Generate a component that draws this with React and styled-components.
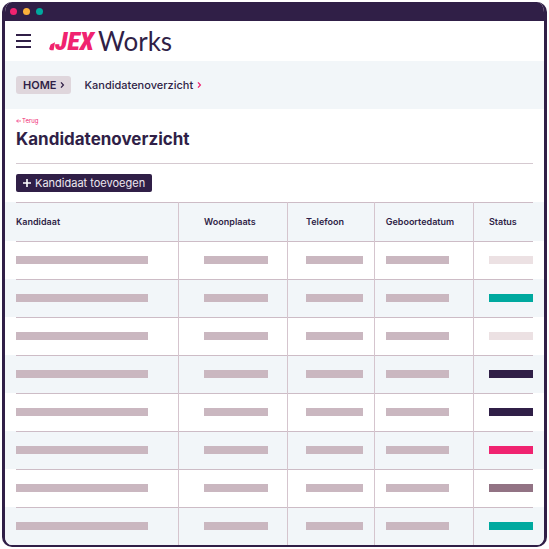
import styled, { createGlobalStyle } from "styled-components";

const GlobalStyle = createGlobalStyle`
  * {
    box-sizing: border-box;
  }

  body {
    margin: 0;
    background: #fff;
    color: #301f47;
    font-family: Inter, "Open Sans", sans-serif;
  }
`;

const Page = styled.div`
  padding: 2px;
`;

const Window = styled.div`
  border: 3px solid #301f47;
  border-top: 0;
  border-bottom-width: 2px;
  border-radius: 10px;
  overflow: hidden;
  background: #fff;
`;

const TitleBar = styled.div`
  display: flex;
  align-items: center;
  gap: 6px;
  height: 19px;
  padding: 0 5px;
  background: #301f47;
`;

const Dot = styled.span`
  width: 7px;
  height: 7px;
  border-radius: 50%;
  background: ${(props) => props.color};
`;

const Header = styled.header`
  display: flex;
  align-items: center;
  gap: 18px;
  height: 40px;
  padding: 0 11px;
`;

const MenuButton = styled.button`
  display: flex;
  padding: 0;
  border: 0;
  background: none;
  color: #301f47;
  cursor: pointer;
`;

const Logo = styled.a`
  display: flex;
  align-items: center;
  color: #301f47;
  text-decoration: none;
`;

const LogoBrand = styled.span`
  color: #f02370;
  font-family: "Liberation Sans Narrow", "Roboto Condensed", "DejaVu Sans Condensed", sans-serif;
  font-size: 26px;
  font-weight: 900;
  font-style: italic;
  line-height: 28px;
`;

const LogoName = styled.span`
  margin-left: 4px;
  font-family: Lato, sans-serif;
  font-size: 26px;
  line-height: 28px;
`;

const Breadcrumbs = styled.nav`
  display: flex;
  align-items: center;
  gap: 13px;
  height: 48px;
  padding: 0 11px;
  background: #f2f6f9;
  font-size: 11px;
  line-height: 18px;
`;

const Crumb = styled.a`
  display: flex;
  align-items: center;
  gap: 4px;
  color: #301f47;
  font-weight: 500;
  text-decoration: none;
`;

const HomeCrumb = styled(Crumb)`
  padding: 0 6px 0 7px;
  border-radius: 3px;
  background: #dfd6dc;
  font-weight: 600;
`;

const Intro = styled.section`
  padding: 8px 11px 0;
`;

const BackLink = styled.a`
  display: flex;
  align-items: center;
  gap: 1px;
  color: #f02370;
  font-size: 6px;
  line-height: 8px;
  text-decoration: none;
`;

const Title = styled.h1`
  margin: 4px 0 0;
  padding-bottom: 14px;
  border-bottom: 1px solid #d5c9d0;
  font-size: 17px;
  font-weight: 700;
  line-height: 20px;
`;

const AddButton = styled.button`
  display: flex;
  align-items: center;
  gap: 4px;
  height: 18px;
  margin: 10px 0;
  padding: 0 7px;
  border: 0;
  border-radius: 2px;
  background: #301f47;
  color: #eee8f0;
  font-family: inherit;
  font-size: 11px;
  line-height: 18px;
  cursor: pointer;
`;

const Table = styled.table`
  width: 100%;
  table-layout: fixed;
  border-spacing: 0;
`;

const Col = styled.col`
  width: ${(props) => props.$share}%;
`;

const Row = styled.tr`
  height: ${(props) => (props.$head ? 39 : 38)}px;
  background: linear-gradient(#cdbcc6, #cdbcc6) 11px 0 / calc(100% - 22px) 1px no-repeat
    ${(props) => (props.$shaded ? "#f2f6f9" : "#fff")};
`;

const cellPadding = (props) => `0 ${props.$right}px 0 ${props.$left}px`;

const HeadCell = styled.th`
  padding: ${cellPadding};
  border-right: 1px solid #d5c5ce;
  font-size: 9px;
  font-weight: 600;
  line-height: 12px;
  text-align: left;
  white-space: nowrap;

  &:last-child {
    border-right: 0;
  }
`;

const Cell = styled.td`
  padding: ${cellPadding};
  border-right: 1px solid #d5c5ce;

  &:last-child {
    border-right: 0;
  }
`;

const Bar = styled.div`
  height: 8px;
  background: ${(props) => props.color || "#cab7c0"};
`;

const columns = [
  { name: "Kandidaat", share: 32.3, left: 11, right: 30 },
  { name: "Woonplaats", share: 20.2, left: 25, right: 19 },
  { name: "Telefoon", share: 16.1, left: 18, right: 11 },
  { name: "Geboortedatum", share: 18.4, left: 11, right: 24 },
  { name: "Status", share: 13, left: 15, right: 11 },
];

const statuses = [
  "#ece1e3",
  "#00a99f",
  "#ece1e3",
  "#301f47",
  "#301f47",
  "#f02370",
  "#927384",
  "#00a99f",
];

const Chevron = ({ color }) => (
  <svg width="5" height="8" viewBox="0 0 5 8" fill="none" stroke={color} strokeWidth="1.3">
    <path d="M1 1.4 3.4 4 1 6.6" />
  </svg>
);

const App = () => {
  return (
    <>
      <GlobalStyle />
      <Page>
        <Window>
          <TitleBar>
            <Dot color="#f02370" />
            <Dot color="#fbb03b" />
            <Dot color="#00a99f" />
          </TitleBar>
          <Header>
            <MenuButton aria-label="Menu">
              <svg width="15" height="14" viewBox="0 0 15 14" stroke="currentColor" strokeWidth="1.8">
                <path d="M0 1h15M0 7h15M0 13h15" />
              </svg>
            </MenuButton>
            <Logo href="#">
              <svg width="6" height="20" viewBox="0 0 6 20" fill="#f02370">
                <path d="M1.6 13.5 6 11.2 4.6 19.2H2Q-.2 19 .4 17z" />
              </svg>
              <LogoBrand>JEX</LogoBrand>
              <LogoName>Works</LogoName>
            </Logo>
          </Header>
          <Breadcrumbs>
            <HomeCrumb href="#">
              HOME <Chevron color="#301f47" />
            </HomeCrumb>
            <Crumb href="#">
              Kandidatenoverzicht <Chevron color="#f02370" />
            </Crumb>
          </Breadcrumbs>
          <main>
            <Intro>
              <BackLink href="#">
                <svg width="5" height="4" viewBox="0 0 5 4" fill="none" stroke="currentColor" strokeWidth=".7">
                  <path d="M5 2H.7M2.2.4.6 2l1.6 1.6" />
                </svg>
                Terug
              </BackLink>
              <Title>Kandidatenoverzicht</Title>
              <AddButton>
                <svg width="8" height="8" viewBox="0 0 8 8" stroke="#fff" strokeWidth="1.6">
                  <path d="M4 0v8M0 4h8" />
                </svg>
                Kandidaat toevoegen
              </AddButton>
            </Intro>
            <Table>
              <colgroup>
                {columns.map((col) => (
                  <Col key={col.name} $share={col.share} />
                ))}
              </colgroup>
              <thead>
                <Row $head $shaded>
                  {columns.map((col) => (
                    <HeadCell key={col.name} $left={col.left} $right={0}>
                      {col.name}
                    </HeadCell>
                  ))}
                </Row>
              </thead>
              <tbody>
                {statuses.map((status, i) => (
                  <Row key={i} $shaded={i % 2 === 1}>
                    {columns.map((col) => (
                      <Cell key={col.name} $left={col.left} $right={col.right}>
                        <Bar color={col.name === "Status" ? status : undefined} />
                      </Cell>
                    ))}
                  </Row>
                ))}
              </tbody>
            </Table>
          </main>
        </Window>
      </Page>
    </>
  );
};

export default App;
